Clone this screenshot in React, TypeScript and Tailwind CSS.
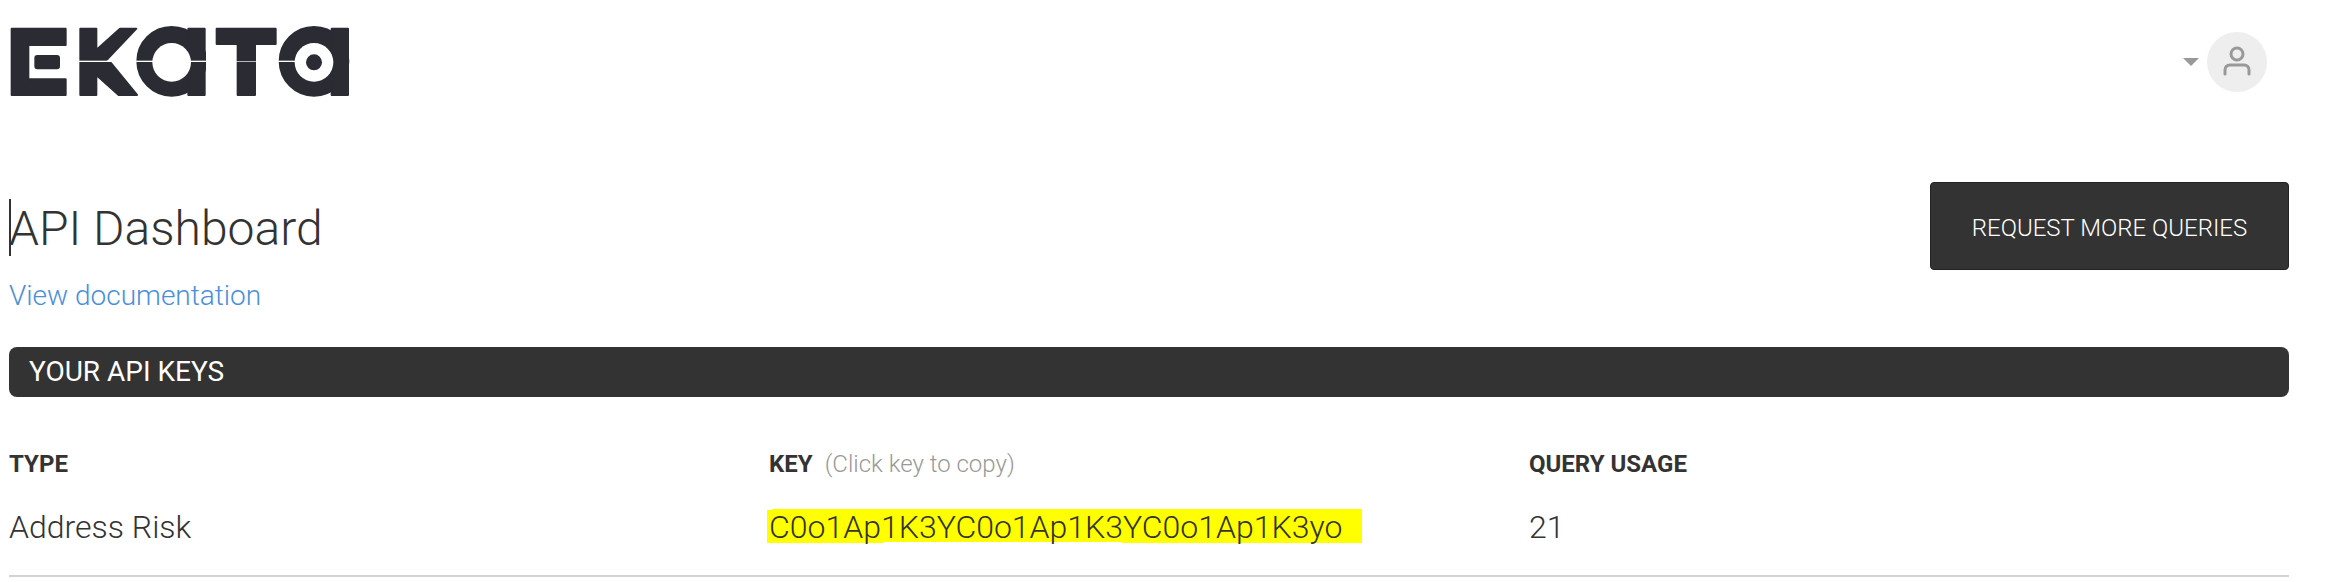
const roboto = "font-['Roboto',sans-serif]";

function EkataLogo() {
  return (
    <svg width="391" height="120" viewBox="27 0 1173 360" className="block">
      <g fill="#2a2b33" stroke="#2a2b33" strokeWidth="6" strokeLinejoin="round">
        {/* E */}
        <path d="M35 86H197V135H85V238H197V285H35Z" />
        <rect x="106" y="168" width="71" height="37" rx="6" />
        {/* K */}
        <path d="M241 86H289V150L360 86H409L318 182H241Z" />
        <path d="M241 186H330L411 285H356L289 225V285H241Z" />
        {/* first a */}
        <circle cx="515" cy="184" r="103" />
        <rect x="565" y="86" width="49" height="199" />
        {/* T */}
        <path d="M650 86H827V132H765V285H713V132H650Z" />
        {/* second a */}
        <circle cx="942" cy="184" r="103" />
        <rect x="995" y="86" width="49" height="199" />
      </g>
      <g fill="#fff">
        <circle cx="515" cy="187" r="58" />
        <circle cx="942" cy="187" r="58" />
        <rect x="618" y="100" width="20" height="170" />
        {/* the white line cut through the letters */}
        <rect x="236" y="182" width="100" height="4" />
        <rect x="405" y="182" width="58" height="4" />
        <rect x="568" y="182" width="52" height="4" />
        <rect x="705" y="183" width="66" height="2" />
        <rect x="832" y="182" width="58" height="4" />
      </g>
      <circle cx="942" cy="187" r="24" fill="#2a2b33" />
    </svg>
  );
}

function UserMenu() {
  return (
    <div className="mr-[22px] flex items-center gap-[8px]">
      <div className="h-0 w-0 border-x-[8px] border-t-[8px] border-x-transparent border-t-[#999]" />
      <div className="flex h-[60px] w-[60px] items-center justify-center rounded-full bg-[#eee]">
        <svg width="30" height="34" viewBox="0 0 30 34" fill="none" stroke="#999" strokeWidth="3" strokeLinecap="round">
          <circle cx="15" cy="9" r="6" />
          <path d="M3 29V25C3 22 5 20 8 20H22C25 20 27 22 27 25V29" />
        </svg>
      </div>
    </div>
  );
}

function KeyCell() {
  return (
    <div className="relative isolate inline-block">
      <div className="absolute top-0 left-[-2px] -z-10 flex items-start">
        <div className="mt-[1px] h-[33px] w-[5px] bg-[#ff0]" />
        <div className="h-[34px] w-[111px] bg-[#ff0]" />
        <div className="h-[33px] w-[238px] bg-[#ff0]" />
        <div className="h-[34px] w-[241px] bg-[#ff0]" />
      </div>
      C0o1Ap1K3YC0o1Ap1K3YC0o1Ap1K3yo
    </div>
  );
}

export default function App() {
  return (
    <div className={`h-[582px] w-[2325px] overflow-hidden bg-white pr-[36px] pl-[9px] text-[#333] ${roboto}`}>
      <header className="flex h-[199px] items-start justify-between">
        <EkataLogo />
        <div className="mt-[32px]">
          <UserMenu />
        </div>
      </header>

      <div className="flex items-start justify-between">
        <div>
          <h1 className="relative text-[48px] leading-[59px] font-light">
            <span className="absolute top-0 left-0 h-[57px] w-[2px] bg-[#333]" />
            API Dashboard
          </h1>
          <a className="mt-[21px] block text-[28px] leading-[33px] font-light text-[#4a90d9]">View documentation</a>
        </div>
        <button className="mt-[-17px] h-[88px] w-[359px] rounded-[4px] border border-[#222] bg-[#333] pt-[4px] text-[24px] font-light text-white">
          REQUEST MORE QUERIES
        </button>
      </div>

      <div className="mt-[35px] flex h-[50px] items-center rounded-[8px] bg-[#333] pl-[20px] text-[28px] text-white">
        YOUR API KEYS
      </div>

      <div className="mt-[54px] grid grid-cols-3 border-b-[2px] border-[#d3d3d3] pb-[29px]">
        <div className="text-[24px] leading-[27px] font-bold">TYPE</div>
        <div className="text-[24px] leading-[27px] font-bold">
          KEY<span className="ml-[12px] font-light text-[#999]">(Click key to copy)</span>
        </div>
        <div className="text-[24px] leading-[27px] font-bold">QUERY USAGE</div>
        <div className="mt-[31px] text-[32px] leading-[37px] font-light">Address Risk</div>
        <div className="mt-[31px] text-[32px] leading-[37px] font-light">
          <KeyCell />
        </div>
        <div className="mt-[31px] text-[32px] leading-[37px] font-light">21</div>
      </div>
    </div>
  );
}
